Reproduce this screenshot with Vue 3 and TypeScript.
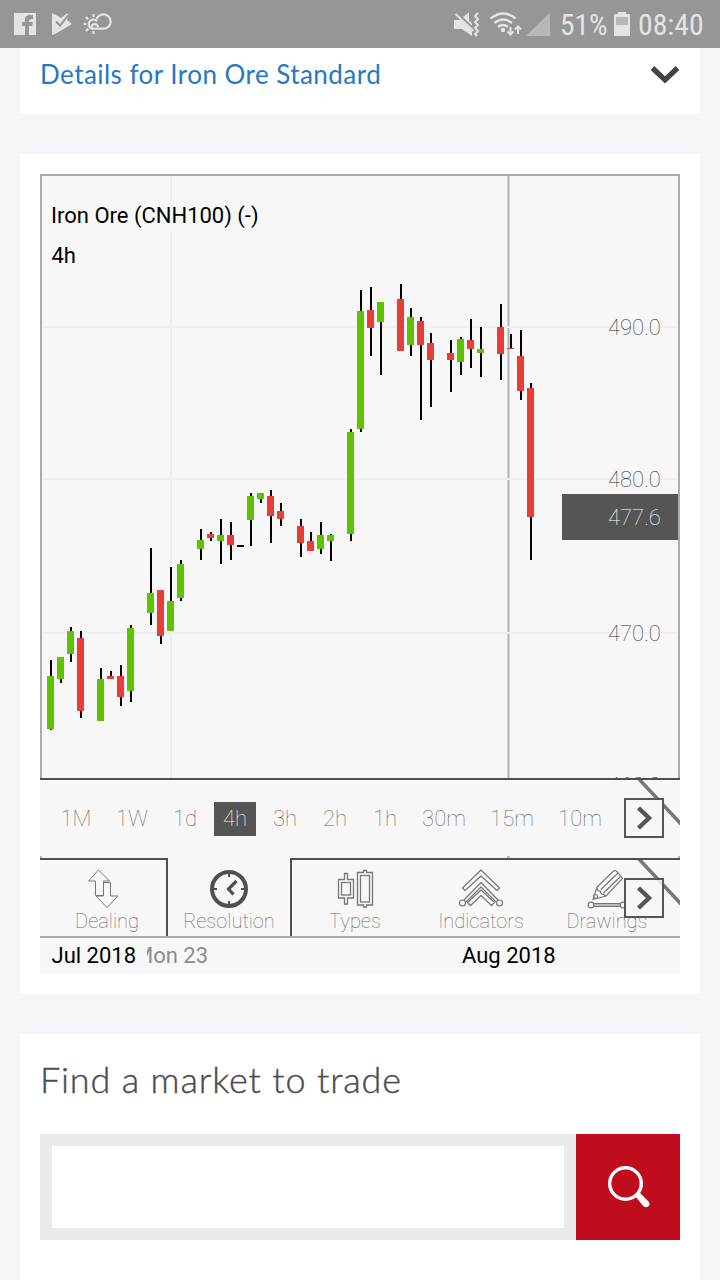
<script setup lang="ts">
type Tone = 'up' | 'down' | 'flat'

interface Candle {
  x: number
  tone: Tone
  high: number
  top: number
  bottom: number
  low: number
}

const c = (x: number, tone: Tone, high: number, top: number, bottom: number, low: number): Candle => ({
  x, tone, high, top, bottom, low,
})

const candles: Candle[] = [
  c(47, 'up', 660, 676, 729, 730),
  c(57, 'up', 657, 657, 679, 683),
  c(67, 'up', 627, 631, 654, 662),
  c(77, 'down', 631, 638, 711, 718),
  c(97, 'up', 668, 679, 721, 721),
  c(107, 'down', 671, 676, 679, 679),
  c(117, 'down', 665, 676, 697, 706),
  c(127, 'up', 625, 628, 691, 702),
  c(147, 'up', 548, 593, 613, 625),
  c(157, 'down', 590, 590, 636, 644),
  c(167, 'up', 567, 601, 631, 631),
  c(177, 'up', 560, 564, 598, 601),
  c(197, 'up', 529, 540, 549, 560),
  c(207, 'down', 532, 534, 538, 541),
  c(217, 'up', 519, 535, 541, 564),
  c(227, 'down', 522, 535, 545, 560),
  c(237, 'flat', 545, 545, 547, 547),
  c(247, 'up', 493, 496, 520, 546),
  c(257, 'up', 493, 493, 499, 503),
  c(267, 'down', 490, 496, 516, 543),
  c(277, 'down', 503, 511, 519, 526),
  c(297, 'down', 519, 526, 543, 557),
  c(307, 'down', 532, 541, 551, 551),
  c(317, 'up', 522, 535, 549, 554),
  c(327, 'up', 534, 535, 541, 561),
  c(347, 'up', 429, 432, 534, 541),
  c(357, 'up', 290, 311, 429, 432),
  c(367, 'down', 287, 310, 328, 356),
  c(377, 'up', 302, 302, 322, 375),
  c(397, 'down', 284, 299, 351, 351),
  c(407, 'up', 308, 317, 345, 356),
  c(417, 'down', 317, 321, 345, 420),
  c(427, 'down', 333, 343, 360, 407),
  c(447, 'down', 340, 353, 360, 392),
  c(457, 'up', 337, 339, 362, 375),
  c(467, 'down', 319, 340, 349, 368),
  c(477, 'up', 327, 349, 353, 377),
  c(497, 'down', 304, 327, 354, 380),
  c(507, 'down', 334, 348, 349, 349),
  c(517, 'down', 330, 356, 391, 400),
  c(527, 'down', 383, 388, 517, 560),
]

const levels = [
  { y: 326, label: '490.0' },
  { y: 478, label: '480.0' },
  { y: 632, label: '470.0' },
  { y: 784, label: '460.0' },
]

const resolutions = [
  { label: '1M', size: 'wide' },
  { label: '1W', size: 'wide' },
  { label: '1d', size: '' },
  { label: '4h', size: 'active' },
  { label: '3h', size: '' },
  { label: '2h', size: '' },
  { label: '1h', size: '' },
  { label: '30m', size: 'wider' },
  { label: '15m', size: 'wider' },
  { label: '10m', size: 'wider' },
]
</script>

<template>
  <div class="screen">
    <header class="status">
      <svg class="status-left" width="120" height="48" viewBox="0 0 120 48">
        <path fill="#e4e4e4" fill-rule="evenodd" d="M14 13h22v22H14z M25 35v-9h-3v-4h3v-2q0-5 5-5h3v4h-2q-2 0-2 2v1h4l-1 4h-3v9z" />
        <path fill="#e4e4e4" d="M52 14.500q0-1.800 1.700-.8l7.300 4.300 6-4.500 1.500 1.500-1.500 5 4 3q1 1-.2 1.800L54 34.500q-2 1-2-1z" />
        <path d="M56 21.500l4 4.300 8-10.500" fill="none" stroke="#969696" stroke-width="2" />
        <g fill="none" stroke="#e4e4e4" stroke-width="2.200">
          <path d="M98 27q-.5-3-3.500-3-3 .5-3 3 .3 1.700 2.500 1.700h9.500a7.200 7.200 0 1 0-6.800-9.700" />
          <path d="M92 28.700a4.700 4.700 0 1 1 5-7.500" />
          <path d="M93.500 14v3M93.500 31v3M83.500 24h3M86 17l2.200 2.200M86 31l2.200-2.200" />
        </g>
      </svg>
      <svg class="status-icons" width="106" height="48" viewBox="450 0 106 48">
        <g fill="#e4e4e4">
          <path d="M454 20h5l10-7.500v8l3 3V36l-10-7h-8z" />
          <path d="M455 12l18 17" stroke="#969696" stroke-width="3.500" />
          <path d="M455.500 14l18 17" stroke="#e4e4e4" stroke-width="2" />
        </g>
        <path d="M478 13l-3 3 3 3-3 3 3 3-3 3 3 3-3 3 2 2" fill="none" stroke="#e4e4e4" stroke-width="2" />
        <g fill="none" stroke="#e4e4e4" stroke-width="2.300">
          <path d="M490.500 18.500q13-10 25 0M494.500 23q9-7 17.500 0M498 27q5-4 10 0" />
          <path d="M510.500 27v7M507.500 31.500l3 3 3-3M518 34v-7M515 29.500l3-3 3 3" stroke-width="2" />
        </g>
        <circle cx="503" cy="30" r="2.300" fill="#e4e4e4" />
        <path d="M550 12.500V36h-24z" fill="#b7b7b7" />
      </svg>
      <span class="status-text battery-text">51%</span>
      <svg class="battery" width="16" height="48" viewBox="614 0 16 48">
        <path fill="#e4e4e4" d="M618 14v-2h8v2h2.500q1.500 0 1.500 1.500V36h-16V15.500q0-1.500 1.500-1.500z" />
        <path fill="#b7b7b7" d="M616 17h12v8h-12z" />
      </svg>
      <span class="status-text clock">08:40</span>
    </header>

    <section class="card details">
      <h2 class="details-title">Details for Iron Ore Standard</h2>
      <svg width="30" height="22" viewBox="0 0 30 22">
        <path d="M2.500 4L15 16 27.500 4" fill="none" stroke="#444" stroke-width="5.200" />
      </svg>
    </section>

    <section class="card chart-card">
      <div class="chart">
        <svg class="plot" width="640" height="604" viewBox="40 174 640 604">
          <rect x="40" y="174" width="640" height="604" fill="#f7f7f7" />
          <rect x="170" y="176" width="2" height="602" fill="#ebecf5" />
          <rect x="507" y="176" width="3" height="602" fill="#d4d4d4" />
          <rect x="508" y="176" width="1" height="602" fill="#b2b2b2" />
          <rect v-for="l in levels" :key="l.y" x="42" :y="l.y" width="636" height="2" fill="#f0f0f0" />
          <g v-for="k in candles" :key="k.x">
            <rect :x="k.x + 3" :y="k.high" width="2" :height="k.low - k.high" fill="#000" />
            <rect :class="k.tone" :x="k.x" :y="k.top" width="7" :height="k.bottom - k.top" />
          </g>
          <text v-for="l in levels" :key="l.label" class="level" x="608" :y="l.y + 9">{{ l.label }}</text>
          <rect x="562" y="494" width="116" height="46" fill="#555" />
          <text class="level current" x="608" y="525">477.6</text>
          <rect x="46" y="201" width="216" height="30" fill="#f7f7f7" />
          <text class="legend" x="51" y="223">Iron Ore (CNH100) (-)</text>
          <text class="legend" x="51.500" y="263">4h</text>
          <path d="M41 778V175h638v603" fill="none" stroke="#acaca6" stroke-width="2" />
        </svg>

        <div class="resolutions">
          <span v-for="r in resolutions" :key="r.label" class="res" :class="r.size"><b>{{ r.label }}</b></span>
          <svg class="ticks" width="640" height="2" viewBox="40 856 640 2">
            <path d="M40 856h2v2h-2zM507 856h3v2h-3zM678 856h2v2h-2z" fill="#bbb" />
          </svg>
          <svg class="more" width="60" height="78" viewBox="620 780 60 78">
            <path d="M638 778l44 47" stroke="#777" stroke-width="3.500" />
            <rect x="625" y="799" width="38" height="38" fill="#f7f7f7" stroke="#555" stroke-width="2" />
            <path d="M638.500 808l10.500 10-10.500 10" fill="none" stroke="#555" stroke-width="4.400" />
          </svg>
        </div>

        <div class="tabs">
          <div class="tab dealing">
            <svg width="44" height="44" viewBox="85 867 44 44">
              <g fill="#f7f7f7" stroke="#777" stroke-width="1">
                <path d="M98.500 870l11 11h-6v14.500h-8V881h-7z" />
                <path d="M103.500 882.500h7V896h7.500l-11 11.500L96 896h7.500z" />
              </g>
            </svg>
            <span>Dealing</span>
          </div>
          <div class="tab resolution">
            <svg width="44" height="44" viewBox="207 867 44 44">
              <circle cx="229" cy="889" r="17" fill="none" stroke="#4f4f4f" stroke-width="4" />
              <path d="M229 873v4M229 901v4M213 889h4M241 889h4" stroke="#4f4f4f" stroke-width="2" />
              <path d="M236.500 881l-8 8 5 5.500" fill="none" stroke="#4f4f4f" stroke-width="3.200" />
            </svg>
            <span>Resolution</span>
          </div>
          <div class="tab types">
            <svg width="44" height="44" viewBox="333 867 44 44">
              <g fill="none" stroke="#777" stroke-width="1.300">
                <path d="M338.500 879.500h6v-6h3v6h6v18.500h-6v6h-3v-6h-6z" />
                <rect x="341.500" y="882.500" width="9" height="12.500" />
                <path d="M357.500 872.500h6v-2h3v2h6v32.500h-6v2h-3v-2h-6z" />
                <rect x="360.500" y="875.500" width="9" height="26.500" />
              </g>
            </svg>
            <span>Types</span>
          </div>
          <div class="tab">
            <svg width="48" height="44" viewBox="457 867 48 44">
              <g fill="none" stroke="#777" stroke-width="1.200" stroke-linejoin="round">
                <path d="M481 870l18.500 18-2.500 2.500-16-14.500-16 14.500-2.500-2.500z" />
                <path d="M464 900l17-17.500 17 17.500M466 902l15-15 15 15" />
                <path d="M481 890l13.500 12.500-3 3L481 895.500 470.500 905.500l-3-3z" />
                <circle cx="462.500" cy="903" r="3" />
                <circle cx="499.500" cy="903" r="3" />
              </g>
            </svg>
            <span>Indicators</span>
          </div>
          <div class="tab">
            <svg width="44" height="44" viewBox="585 867 44 44">
              <g fill="none" stroke="#777" stroke-width="1.200">
                <path d="M593 899.500l4-12.500 16.500-16q2-1 4 1l5 6.500L606 896z" />
                <path d="M597 887.500q0 4 3.500 3.500 0 3.500 2.500 3l3 2M601 889.500l17-16.500M603.500 893l17-16.500" />
                <circle cx="595.500" cy="896.500" r="2" />
                <path d="M593.500 903.500h28v3h-28z" fill="#bbb" />
                <circle cx="591" cy="905" r="2.800" fill="#f7f7f7" />
                <circle cx="623" cy="905" r="2.800" fill="#f7f7f7" />
              </g>
            </svg>
            <span>Drawings</span>
          </div>
          <svg class="more" width="60" height="76" viewBox="620 860 60 76">
            <path d="M638 858l44 47" stroke="#777" stroke-width="3.500" />
            <rect x="625" y="879" width="38" height="38" fill="#f7f7f7" fill-opacity=".85" stroke="#555" stroke-width="2" />
            <path d="M638.500 888l10.500 10-10.500 10" fill="none" stroke="#555" stroke-width="4.400" />
          </svg>
        </div>

        <svg class="dates" width="640" height="36" viewBox="40 938 640 36">
          <text class="legend minor" x="134" y="963">Mon 23</text>
          <rect x="40" y="938" width="107" height="36" fill="#f7f7f7" />
          <text class="legend" x="51.500" y="963">Jul 2018</text>
          <text class="legend" x="462" y="963">Aug 2018</text>
        </svg>
      </div>
    </section>

    <section class="card find">
      <h1 class="find-title">Find a market to trade</h1>
      <form class="search" @submit.prevent>
        <input class="search-input" type="text" aria-label="Market" />
        <button class="search-button" type="submit" aria-label="Search">
          <svg width="48" height="48" viewBox="604 1163 48 48">
            <circle cx="625.500" cy="1183.500" r="15.800" fill="none" stroke="#fff" stroke-width="3.400" />
            <path d="M635 1196l4-4 9.500 9.500q2 2.500 0 4.700-2.500 2-5 0z" fill="#fff" />
          </svg>
        </button>
      </form>
    </section>
  </div>
</template>

<style>
body {
  margin: 0;
  background: #f4f5f8;
}
</style>

<style scoped>
.screen {
  width: 720px;
  height: 1280px;
  overflow: hidden;
  background: #f4f5f8;
  font-family: Roboto, "Liberation Sans", sans-serif;
}
.status {
  display: flex;
  height: 48px;
  background: #969696;
  color: #e4e4e4;
}
.status svg { flex: none; }
.status-icons { margin-left: 330px; }
.status-text {
  flex: none;
  font-family: "Roboto Condensed", Roboto, sans-serif;
  font-size: 30px;
  line-height: 49px;
  white-space: nowrap;
  transform-origin: left center;
}
.battery-text { width: 54px; margin-left: 4px; transform: scaleX(.98); }
.battery { margin-left: 0; }
.clock { width: 70px; margin-left: 8px; transform: scaleX(.99); }
.card {
  box-sizing: border-box;
  width: 680px;
  margin: 0 20px 40px;
  background: #fff;
}
.details {
  display: flex;
  justify-content: space-between;
  height: 66px;
  padding: 0 20px;
}
.details svg { margin-top: 16px; }
.details-title {
  margin: 0;
  font: 400 26px/52px Lato, sans-serif;
  letter-spacing: .46px;
  color: #2478c4;
  white-space: nowrap;
}
.chart-card { height: 840px; padding: 20px; }
.chart { width: 640px; background: #f7f7f7; }
.plot, .dates { display: block; }
.up { fill: #5fc304; }
.down { fill: #e93e37; }
.flat { fill: #000; }
.legend { font-size: 22px; fill: #000; }
.minor { fill: #8c8c8c; }
.level { font-size: 22px; font-weight: 100; fill: #333; }
.current { fill: #fff; }
.resolutions {
  position: relative;
  display: flex;
  align-items: center;
  height: 78px;
  padding-left: 8px;
  border-top: 2px solid #4f4f4f;
}
.res {
  width: 50px;
  text-align: center;
  color: #666;
}
.res b {
  display: inline-block;
  font-size: 22px;
  font-weight: 100;
  line-height: 34px;
}
.wide { width: 56px; }
.wider { width: 68px; }
.active b { width: 42px; background: #555; color: #f7f7f7; }
.more { position: absolute; right: 0; top: 0; }
.ticks { position: absolute; left: 0; bottom: 0; }
.tabs {
  position: relative;
  display: flex;
  border-bottom: 2px solid #acaca6;
  box-sizing: border-box;
  height: 80px;
}
.tab {
  box-sizing: border-box;
  flex: none;
  display: flex;
  flex-direction: column;
  align-items: center;
  width: 126px;
  padding-top: 7px;
  border-top: 2px solid #4f4f4f;
  color: #666;
  font-size: 20px;
  font-weight: 100;
  line-height: 20px;
}
.tab svg { flex: none; }
.dealing { width: 128px; padding-left: 8px; border-right: 2px solid #4f4f4f; }
.resolution { width: 122px; border-top-color: transparent; }
.types { width: 128px; border-left: 2px solid #4f4f4f; }
.tab:nth-child(5) { width: 136px; padding-right: 10px; }
.tabs .more { top: 2px; }
.find { height: 286px; padding: 20px; margin-bottom: 0; }
.find-title {
  margin: 0 0 30px;
  font: 300 36px/50px Lato, sans-serif;
  letter-spacing: .83px;
  color: #4b4b52;
  -webkit-text-stroke: .4px #4b4b52;
  white-space: nowrap;
}
.search { display: flex; width: 640px; height: 106px; }
.search-input {
  box-sizing: border-box;
  width: 536px;
  border: 12px solid #eaeaec;
  background: #fff;
  outline: none;
}
.search-button {
  display: flex;
  align-items: center;
  justify-content: center;
  width: 104px;
  padding: 0;
  border: 0;
  background: #c00d1e;
}
</style>
